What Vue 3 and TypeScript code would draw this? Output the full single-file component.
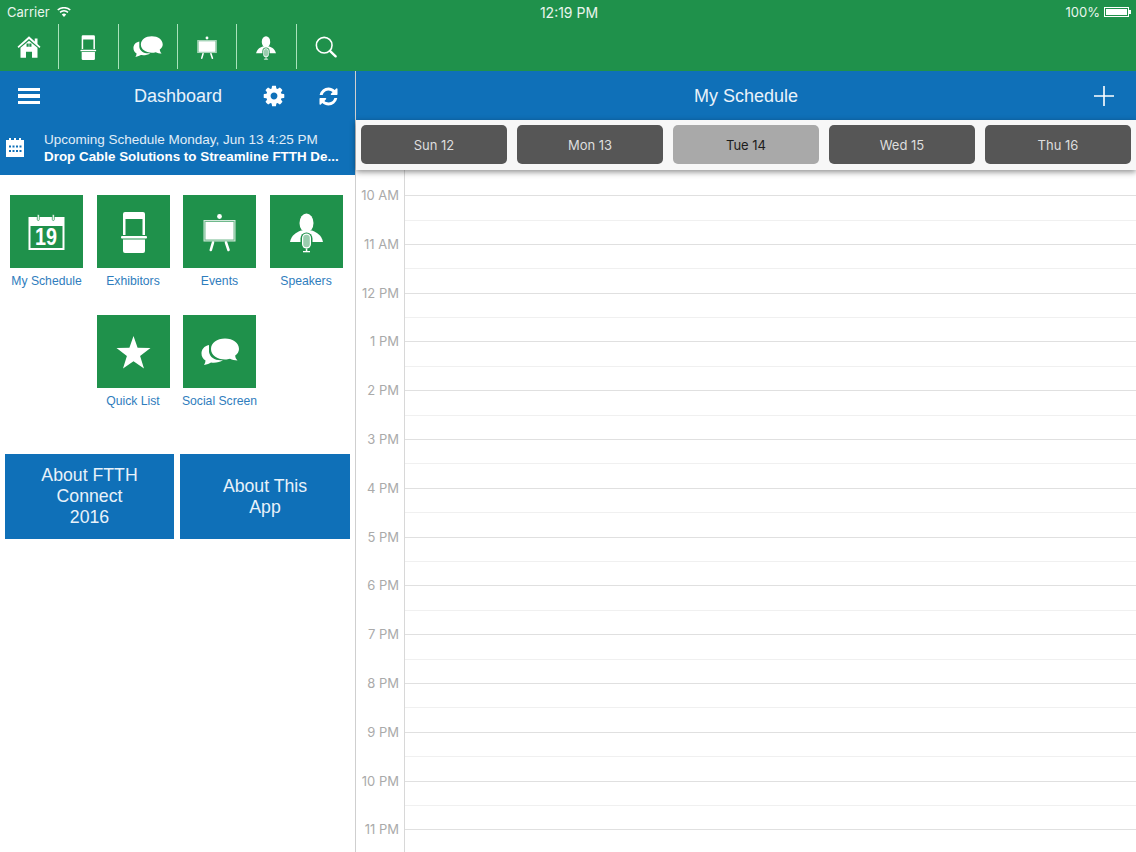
<script setup lang="ts">
const tabs = ['home', 'booth', 'chat', 'board', 'speaker', 'search']
const tiles = [
  { icon: 'calendar', label: 'My Schedule' },
  { icon: 'booth', label: 'Exhibitors' },
  { icon: 'board', label: 'Events' },
  { icon: 'speaker', label: 'Speakers' },
  { icon: 'star', label: 'Quick List' },
  { icon: 'chat', label: 'Social Screen' },
]
const days = [
  { label: 'Sun 12', active: false },
  { label: 'Mon 13', active: false },
  { label: 'Tue 14', active: true },
  { label: 'Wed 15', active: false },
  { label: 'Thu 16', active: false },
]
const hours = ['10 AM', '11 AM', '12 PM', '1 PM', '2 PM', '3 PM', '4 PM', '5 PM', '6 PM', '7 PM', '8 PM', '9 PM', '10 PM', '11 PM']
</script>

<template>
  <div class="app">
    <svg class="defs" xmlns="http://www.w3.org/2000/svg">
      <symbol id="home" viewBox="0 0 73 73">
        <path fill="#fff" d="M36.5 17 L47 26.5 V21 H52 V31 L57.5 36 L55.5 38.5 L36.5 22 L17.5 38.5 L15.5 36 Z" />
        <path fill="#fff" fill-rule="evenodd" d="M36.5 25 L52 38 V56 H42 V45 H31 V56 H21 V38 Z M32 30 V36 H36 V30 Z M37 30 V36 H41 V30 Z" />
      </symbol>
      <symbol id="booth" viewBox="0 0 73 73">
        <path fill="#fff" fill-rule="evenodd" d="M28 17 H46 Q48 17 48 19 V40 H26 V19 Q26 17 28 17 Z M28.5 24 V40 H45.5 V24 Z" />
        <rect x="24" y="41" width="26" height="2.6" rx="1" fill="#fff" />
        <path fill="#fff" d="M26 44.6 H48 V56 Q48 58 46 58 H28 Q26 58 26 56 Z" />
      </symbol>
      <symbol id="chat" viewBox="0 0 73 73">
        <path fill="#fff" d="M26 30 C21 31 18.5 34.5 18.5 38.5 C18.5 41.5 20 44 22.5 45.5 C22.5 47 22 48.5 21 50 C24 49.5 26.5 48.5 28 47.5 C32 48 37 47.5 40 45 C33 46 27 43 26 37 Z" />
        <path fill="#fff" d="M42 23.5 C34 23.5 28 28 28 34 C28 40 34 44.5 42 44.5 C44 44.5 45.5 44.3 47 43.8 C49 45 52 45.5 54.5 45.5 C53 44 52.3 42.5 52.2 40.5 C54.5 39 56 36.5 56 34 C56 28 50 23.5 42 23.5 Z" />
      </symbol>
      <symbol id="board" viewBox="0 0 73 73">
        <circle cx="36.5" cy="21.5" r="2.4" fill="#fff" />
        <rect x="20.5" y="25" width="32" height="21.5" fill="#fff" opacity=".8" />
        <rect x="21.5" y="26" width="30" height="19.5" fill="#1f914b" opacity=".55" />
        <rect x="22.5" y="27" width="28" height="17.5" fill="#fff" />
        <path stroke="#fff" stroke-width="2.6" stroke-linecap="round" d="M30 47.5 L27.8 55 M43 47.5 L45.5 55" />
      </symbol>
      <symbol id="speaker" viewBox="0 0 73 73">
        <ellipse cx="36.5" cy="28" rx="7" ry="9.5" fill="#fff" />
        <path fill="#fff" d="M31 35.5 C26 37.5 21.5 40 20 47 H53 C51.5 40 47 37.5 42 35.5 Z" />
        <rect x="30.5" y="37.5" width="12" height="17.5" rx="6" fill="#1f914b" />
        <rect x="32" y="38.5" width="9" height="15" rx="4.5" fill="#fff" />
        <rect x="33.2" y="39.7" width="6.6" height="12.6" rx="3.3" fill="#1f914b" opacity=".45" />
        <rect x="35.8" y="53.5" width="1.5" height="3.5" fill="#fff" />
        <rect x="33" y="56" width="7" height="1.3" fill="#fff" />
      </symbol>
      <symbol id="calendar" viewBox="0 0 73 73">
        <path fill="#fff" fill-rule="evenodd" d="M18.5 22 H54.5 V55 H18.5 Z M20.5 31 V53 H52.5 V31 Z" />
        <rect x="27.3" y="19.5" width="2" height="6" rx="1" fill="#fff" stroke="#1f914b" stroke-width=".7" />
        <rect x="42.3" y="19.5" width="2" height="6" rx="1" fill="#fff" stroke="#1f914b" stroke-width=".7" />
        <text x="25" y="50" textLength="22" lengthAdjust="spacingAndGlyphs" class="cal-num">19</text>
      </symbol>
      <symbol id="star" viewBox="0 0 73 73">
        <path fill="#fff" d="M36.5 21 L40.6 32.8 L53.5 33 L43.1 41 L47 53.5 L36.5 46.2 L26 53.5 L29.9 41 L19.5 33 L32.4 32.8 Z" />
      </symbol>
      <symbol id="search" viewBox="0 0 73 73">
        <circle cx="33.5" cy="33.5" r="13" fill="none" stroke="#fff" stroke-width="2.6" />
        <path stroke="#fff" stroke-width="4" stroke-linecap="round" d="M43 43 L52.5 52" />
      </symbol>
    </svg>

    <header class="top">
      <div class="status">
        <div class="status-left">
          <span>Carrier</span>
          <svg class="wifi" viewBox="0 0 14 10">
            <path fill="#fff" d="M7 10 L4.8 7.4 A3.4 3.4 0 0 1 9.2 7.4 Z M7 4.4 A5.5 5.5 0 0 0 3.5 5.9 L2.5 4.7 A7 7 0 0 1 11.5 4.7 L10.5 5.9 A5.5 5.5 0 0 0 7 4.4 Z M7 1.6 A9 9 0 0 0 1.3 3.5 L0.2 2.4 A10.5 10.5 0 0 1 13.8 2.4 L12.7 3.5 A9 9 0 0 0 7 1.6 Z" />
          </svg>
        </div>
        <div class="status-time">12:19 PM</div>
        <div class="status-right">
          <span>100%</span>
          <span class="battery"><span class="battery-fill"></span></span>
          <span class="battery-tip"></span>
        </div>
      </div>
      <nav class="tabs">
        <div v-for="tab in tabs" :key="tab" class="tab">
          <svg :class="['tab-icon', 'tab-' + tab]"><use :href="'#' + tab" /></svg>
        </div>
      </nav>
    </header>

    <div class="body">
      <aside class="left">
        <div class="bar">
          <div class="burger"><span></span><span></span><span></span></div>
          <div class="bar-title">Dashboard</div>
          <svg class="gear" viewBox="0 0 1792 1792"><path fill="#fff" d="M1152 896q0-106-75-181t-181-75-181 75-75 181 75 181 181 75 181-75 75-181zm512-109v222q0 12-8 23t-20 13l-185 28q-19 54-39 91 35 50 107 138 10 12 10 25t-9 23q-27 37-99 108t-94 71q-12 0-26-9l-138-108q-44 23-91 38-16 136-29 186-7 28-36 28h-222q-14 0-24.5-8.5t-11.5-21.5l-28-184q-49-16-90-37l-141 107q-10 9-25 9-14 0-25-11-126-114-165-168-7-10-7-23 0-12 8-23 15-21 51-66.5t54-70.5q-27-50-41-99l-183-27q-13-2-21-12.5t-8-23.5v-222q0-12 8-23t19-13l186-28q14-46 39-92-40-57-107-138-10-12-10-24 0-10 9-23 26-36 98.5-107.5t94.5-71.5q13 0 26 10l138 107q44-23 91-38 16-136 29-186 7-28 36-28h222q14 0 24.5 8.5t11.5 21.5l28 184q49 16 90 37l142-107q9-9 24-9 13 0 25 10 129 119 165 170 7 8 7 22 0 12-8 23-15 21-51 66.5t-54 70.5q26 50 41 98l183 28q13 2 21 12.5t8 23.5z" /></svg>
          <svg class="refresh" viewBox="0 0 1792 1792"><path fill="#fff" d="M1639 1056q0 5-1 7-64 268-268 434.5t-478 166.5q-146 0-282.5-55t-243.5-157l-129 129q-19 19-45 19t-45-19-19-45v-448q0-26 19-45t45-19h448q26 0 45 19t19 45-19 45l-137 137q71 66 161 102t187 36q134 0 250-65t186-179q11-17 53-117 8-23 30-23h192q13 0 22.5 9.5t9.5 22.5zm25-800v448q0 26-19 45t-45 19h-448q-26 0-45-19t-19-45 19-45l138-138q-148-137-349-137-134 0-250 65t-186 179q-11 17-53 117-8 23-30 23h-199q-13 0-22.5-9.5t-9.5-22.5v-7q65-268 270-434.5t480-166.5q146 0 284 55.5t245 156.5l130-129q19-19 45-19t45 19 19 45z" /></svg>
        </div>
        <div class="upcoming">
          <svg class="up-icon" viewBox="0 0 20 20">
            <path fill="#fff" fill-rule="evenodd" d="M1 2 H4 V0 H6 V2 H9 V0 H11 V2 H14 V0 H16 V2 H19 V19 H1 Z M4 7.5 V9.5 H6 V7.5 Z M7.5 7.5 V9.5 H9.5 V7.5 Z M11 7.5 V9.5 H13 V7.5 Z M14.5 7.5 V9.5 H16.5 V7.5 Z M4 12 V14 H6 V12 Z M7.5 12 V14 H9.5 V12 Z M11 12 V14 H13 V12 Z M14.5 12 V14 H16.5 V12 Z" />
          </svg>
          <div class="up-text">
            <div class="up-line">Upcoming Schedule Monday, Jun 13 4:25 PM</div>
            <div class="up-line up-bold">Drop Cable Solutions to Streamline FTTH De...</div>
          </div>
        </div>
        <div class="tiles">
          <div v-for="t in tiles" :key="t.label" class="cell">
            <div class="tile"><svg class="tile-icon"><use :href="'#' + t.icon" /></svg></div>
            <div class="cell-label">{{ t.label }}</div>
          </div>
        </div>
        <div class="abouts">
          <div class="about">About FTTH<br />Connect<br />2016</div>
          <div class="about">About This<br />App</div>
        </div>
      </aside>

      <main class="right">
        <div class="bar bar-right">
          <div class="right-title">My Schedule</div>
          <svg class="plus" viewBox="0 0 20 20"><path stroke="#fff" stroke-width="1.6" d="M10 0 V20 M0 10 H20" /></svg>
        </div>
        <div class="days">
          <div v-for="d in days" :key="d.label" :class="['day', { 'day-active': d.active }]">{{ d.label }}</div>
        </div>
        <div class="schedule">
          <div class="times">
            <div v-for="h in hours" :key="h" class="time">{{ h }}</div>
          </div>
          <div class="lines">
            <div v-for="h in hours" :key="h" class="line"><div class="half"></div></div>
          </div>
        </div>
      </main>
    </div>
  </div>
</template>

<style scoped>
.app {
  width: 1136px;
  height: 852px;
  overflow: hidden;
  display: flex;
  flex-direction: column;
  background: #fff;
  font-family: "Liberation Sans", Arial, sans-serif;
}
.defs { display: none; }
.cal-num {
  font-family: "Liberation Sans", sans-serif;
  font-weight: 700;
  font-size: 23px;
  fill: #fff;
}
.top {
  height: 71px;
  flex: none;
  background: #1f914b;
  color: #fff;
}
.status {
  height: 24px;
  display: grid;
  grid-template-columns: 1fr auto 1fr;
  align-items: center;
  padding: 0 5px 0 7px;
  font-family: Inter, "Liberation Sans", sans-serif;
  font-size: 13px;
  color: #e9f5ed;
}
.status-left { display: flex; align-items: center; gap: 7px; }
.wifi { width: 14px; height: 10px; }
.status-time { font-size: 14px; }
.status-right { display: flex; align-items: center; justify-content: flex-end; }
.battery {
  width: 25px;
  height: 10px;
  margin-left: 4px;
  border: 1px solid #fff;
  padding: 1px;
  box-sizing: border-box;
  display: flex;
}
.battery-fill { flex: 1; background: #fff; }
.battery-tip { width: 2px; height: 4px; background: #fff; }
.tabs {
  width: 355px;
  height: 45px;
  display: flex;
}
.tab {
  flex: 1;
  display: flex;
  align-items: center;
  justify-content: center;
  border-right: 1.5px solid #a9e2bb;
}
.tab:last-child { border-right: none; }
.tab-icon { width: 44px; height: 44px; }
.tab-chat { width: 57px; height: 57px; flex: none; }
.tab-home { width: 40px; height: 40px; }
.body { flex: 1; display: flex; min-height: 0; }
.left {
  width: 355px;
  flex: none;
  border-right: 1px solid #cfcfcf;
}
.bar {
  height: 50px;
  background: #0f70b8;
  display: flex;
  align-items: center;
  color: #fff;
  box-sizing: border-box;
  padding-left: 18px;
}
.burger { width: 22px; display: flex; flex-direction: column; gap: 3px; }
.burger span { height: 3.6px; background: #fff; }
.bar-title {
  margin-left: 94px;
  width: 88px;
  font-size: 18px;
  white-space: nowrap;
  color: #e8f2fa;
}
.gear { width: 24px; height: 24px; margin-left: 40px; }
.refresh { width: 21px; height: 21px; margin-left: 32px; }
.upcoming {
  height: 54px;
  background: #0f70b8;
  display: flex;
  align-items: center;
  color: #fff;
}
.up-icon { width: 20px; height: 20px; margin-left: 5px; flex: none; }
.up-text { margin-left: 19px; width: 300px; }
.up-line { font-size: 13.5px; line-height: 17.5px; white-space: nowrap; color: #e0edf7; }
.up-bold { font-size: 13.4px; font-weight: 700; color: #fff; }
.tiles {
  width: 346px;
  margin: 20px 0 0 3.25px;
  display: flex;
  flex-wrap: wrap;
  justify-content: center;
}
.cell {
  width: 86.5px;
  height: 120px;
  display: flex;
  flex-direction: column;
  align-items: center;
}
.tile {
  width: 73px;
  height: 73px;
  background: #1f914b;
}
.tile-icon { width: 73px; height: 73px; display: block; }
.cell-label {
  margin-top: 5px;
  font-size: 12.2px;
  line-height: 16px;
  color: #2f7dbd;
  white-space: nowrap;
}
.abouts {
  display: flex;
  gap: 6px;
  padding: 19px 5px 0;
}
.about {
  width: 169px;
  height: 85px;
  background: #0f70b8;
  color: #e8f2fa;
  font-size: 17.7px;
  line-height: 21px;
  display: flex;
  align-items: center;
  justify-content: center;
  text-align: center;
}
.about + .about { width: 170px; }
.right { flex: 1; min-width: 0; display: flex; flex-direction: column; }
.bar-right {
  height: 49px;
  flex: none;
  padding: 0 22px 0 0;
  justify-content: space-between;
}
.right-title {
  flex: 1;
  text-align: center;
  font-size: 18px;
  color: #e8f2fa;
  padding: 2px 0 0 42px;
}
.plus { width: 20px; height: 20px; }
.days {
  height: 50px;
  flex: none;
  box-sizing: border-box;
  padding: 5px;
  display: flex;
  gap: 10px;
  background: #f7f7f7;
  box-shadow: 0 2px 6px rgba(0, 0, 0, .45);
  position: relative;
}
.day {
  flex: 1;
  height: 39px;
  border-radius: 5px;
  background: #565656;
  color: #dedede;
  font-family: Inter, "Liberation Sans", sans-serif;
  font-size: 13px;
  display: flex;
  align-items: center;
  justify-content: center;
}
.day-active { background: #a9a9a9; color: #1c1c1c; }
.schedule { flex: 1; min-height: 0; display: flex; overflow: hidden; }
.times {
  width: 48px;
  flex: none;
  padding-top: 25px;
  box-sizing: border-box;
}
.time {
  height: 48.8px;
  line-height: 0;
  padding-right: 5px;
  text-align: right;
  color: #aaa;
  font-family: Inter, "Liberation Sans", sans-serif;
  font-size: 13px;
}
.lines {
  flex: 1;
  border-left: 1px solid #d8d8d8;
  padding-top: 25px;
}
.line {
  height: 48.8px;
  box-sizing: border-box;
  border-top: 1px solid #e0e0e0;
}
.half { height: 23.5px; border-bottom: 1px solid #f0f0f0; }
</style>
